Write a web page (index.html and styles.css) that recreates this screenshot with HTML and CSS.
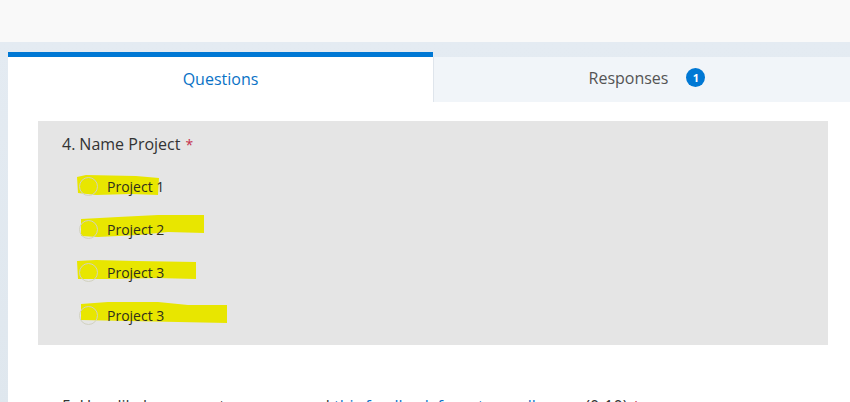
FILE: index.html
```html
<!DOCTYPE html>
<html>
<head>
<meta charset="utf-8">
<link rel="stylesheet" href="styles.css">
</head>
<body>
<div class="topbar"></div>
<div class="main">
  <div class="tabs">
    <div class="tab tab-active">Questions</div>
    <div class="tab tab-idle">Responses <span class="badge">1</span></div>
  </div>
  <div class="content">
    <div class="card">
      <div class="qtitle">4.<span class="qname">Name Project</span><span class="req">*</span></div>
      <div class="options">
        <div class="opt">
          <svg class="hl" width="90" height="24" viewBox="0 0 90 24"><polygon points="1,6 10,4 60,5 83,7 82,24 55,23 20,24 2,22" /></svg>
          <span class="radio"></span><span class="label">Project 1</span>
        </div>
        <div class="opt">
          <svg class="hl" width="130" height="26" viewBox="0 0 130 26"><polygon points="3,7 40,5 80,3 126,3 126,21 90,20 60,23 20,25 3,24" /></svg>
          <span class="radio"></span><span class="label">Project 2</span>
        </div>
        <div class="opt">
          <svg class="hl" width="125" height="24" viewBox="0 0 125 24"><polygon points="1,4 20,3 60,4 120,5 120,22 80,21 40,22 2,22" /></svg>
          <span class="radio"></span><span class="label">Project 3</span>
        </div>
        <div class="opt">
          <svg class="hl" width="150" height="26" viewBox="0 0 150 26"><polygon points="3,5 30,3 80,3 110,6 149,6 149,24 100,23 50,22 3,21" /></svg>
          <span class="radio"></span><span class="label">Project 3</span>
        </div>
      </div>
    </div>
    <div class="next">5. How likely are you to recommend <span class="link">this feedback form to a colleague</span> (0-10)<span class="req">*</span></div>
  </div>
</div>
</body>
</html>
```
FILE: styles.css
```css
html, body {
  margin: 0;
  padding: 0;
  height: 100%;
  overflow: hidden;
}
body {
  font-family: "Open Sans", "Noto Sans", sans-serif;
  background: #e4ebf1;
}
.topbar {
  height: 42px;
  background: #f9f9f9;
}
.main {
  padding: 10px 0 0 8px;
  background: linear-gradient(to bottom, #e4ebf2, #dfe7ee);
  height: 360px;
}
.tabs {
  display: flex;
  height: 50px;
}
.tab {
  display: flex;
  align-items: center;
  justify-content: center;
  font-size: 16px;
}
.tab-active {
  width: 425px;
  background: #ffffff;
  border-top: 5px solid #0078d4;
  color: #0a72c6;
  box-sizing: border-box;
  padding-bottom: 2px;
}
.tab-idle {
  flex: 1;
  margin-top: 5px;
  background: #f1f5f9;
  border-left: 1px solid #dfe5ec;
  color: #545454;
  padding-bottom: 4px;
  padding-left: 10px;
}
.badge {
  display: inline-flex;
  align-items: center;
  justify-content: center;
  width: 19px;
  height: 19px;
  border-radius: 50%;
  background: #0078d4;
  color: #fff;
  font-size: 11px;
  font-weight: 700;
  margin-left: 18px;
}
.content {
  background: #ffffff;
  padding: 19px 22px 0 30px;
  height: 310px;
  overflow: hidden;
}
.card {
  background: #e5e5e5;
  height: 224px;
  box-sizing: border-box;
  padding: 11px 24px 0 24px;
}
.qtitle {
  font-size: 16px;
  color: #333333;
  height: 24px;
  line-height: 24px;
}
.qname {
  margin-left: 4px;
}
.req {
  color: #c4314b;
  margin-left: 5px;
  font-size: 14px;
}
.options {
  display: flex;
  flex-direction: column;
  gap: 23px;
  margin-top: 20px;
  padding-left: 17px;
}
.opt {
  position: relative;
  display: flex;
  align-items: center;
  height: 20px;
}
.hl {
  position: absolute;
  left: -3px;
  top: -5px;
  fill: #e8e600;
}
.opt:nth-child(2) .hl { top: -7px; left: -1px; }
.opt:nth-child(3) .hl { top: -5px; left: -3px; }
.opt:nth-child(4) .hl { top: -6px; left: -1px; }
.radio {
  position: relative;
  width: 19px;
  height: 19px;
  border-radius: 50%;
  border: 1px solid #d2d2c0;
  box-sizing: border-box;
}
.label {
  position: relative;
  margin-left: 9px;
  font-size: 14px;
  color: #2e2e1e;
}
.next {
  margin-top: 50px;
  padding-left: 24px;
  font-size: 16px;
  color: #333333;
  white-space: nowrap;
}
.link {
  color: #0a72c6;
}
```
